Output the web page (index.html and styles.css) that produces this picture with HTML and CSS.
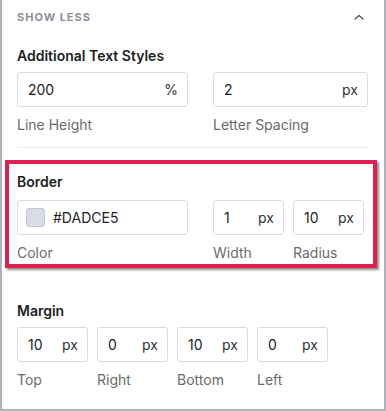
FILE: index.html
```html
<!DOCTYPE html>
<html lang="en">
<head>
  <meta charset="UTF-8" />
  <meta name="viewport" content="width=device-width, initial-scale=1.0" />
  <title>Text Styles</title>
  <link rel="stylesheet" href="styles.css">
</head>
<body>

  <div class="panel">
    <div class="toggle">
      <span class="toggle-label">SHOW LESS</span>
      <svg class="chevron" width="10" height="6" viewBox="0 0 10 6">
        <path d="M1 5 L5 1.5 L9 5" fill="none" stroke="#555" stroke-width="1.4" stroke-linecap="round" stroke-linejoin="round"/>
      </svg>
    </div>

    <div class="group">
      <h3>Additional Text Styles</h3>
      <div class="row">
        <div class="field field-wide">
          <div class="input"><span>200</span><span class="unit">%</span></div>
          <label>Line Height</label>
        </div>
        <div class="field field-mid">
          <div class="input"><span>2</span><span class="unit">px</span></div>
          <label>Letter Spacing</label>
        </div>
      </div>
    </div>

    <hr class="divider">

    <div class="group highlight">
      <h3>Border</h3>
      <div class="row">
        <div class="field field-wide">
          <div class="input color-input">
            <span class="swatch"></span><span>#DADCE5</span>
          </div>
          <label>Color</label>
        </div>
        <div class="small-set">
          <div class="field field-small">
            <div class="input"><span>1</span><span class="unit">px</span></div>
            <label>Width</label>
          </div>
          <div class="field field-small">
            <div class="input"><span>10</span><span class="unit">px</span></div>
            <label>Radius</label>
          </div>
        </div>
      </div>
    </div>

    <div class="group margin-group">
      <h3>Margin</h3>
      <div class="small-set">
        <div class="field field-small">
          <div class="input"><span>10</span><span class="unit">px</span></div>
          <label>Top</label>
        </div>
        <div class="field field-small">
          <div class="input"><span>0</span><span class="unit">px</span></div>
          <label>Right</label>
        </div>
        <div class="field field-small">
          <div class="input"><span>10</span><span class="unit">px</span></div>
          <label>Bottom</label>
        </div>
        <div class="field field-small">
          <div class="input"><span>0</span><span class="unit">px</span></div>
          <label>Left</label>
        </div>
      </div>
    </div>
  </div>

</body>
</html>
```

FILE: styles.css
```css
html, body {
  margin: 0;
  background: #fff;
}
body {
  font-family: 'Inter', 'Liberation Sans', sans-serif;
  color: #1e1e1e;
}
.panel {
  box-sizing: border-box;
  width: 386px;
  height: 411px;
  border: 2px solid #a9b6c2;
  border-top: none;
  padding: 0 16px 0 15px;
}
.toggle {
  display: flex;
  align-items: center;
  justify-content: space-between;
  height: 34px;
  padding-right: 4px;
}
.toggle-label {
  font-size: 11px;
  font-weight: 700;
  letter-spacing: 1px;
  color: #8b9099;
}
.group h3 {
  margin: 0;
  font-size: 14px;
  line-height: 20px;
  font-weight: 600;
  color: #1e1e1e;
}
.group > h3 {
  margin-top: 12px;
}
.row {
  display: flex;
  gap: 25px;
  margin-top: 6px;
}
.small-set {
  display: flex;
  gap: 9px;
}
.field label {
  display: block;
  margin-top: 8px;
  font-size: 14px;
  line-height: 20px;
  color: #6b6b6b;
}
.field-wide { width: 171px; }
.field-mid { width: 155px; }
.field-small { width: 71px; }
.input {
  box-sizing: border-box;
  height: 35px;
  display: flex;
  align-items: center;
  justify-content: space-between;
  padding: 0 9px 0 10px;
  border: 1px solid #dadce5;
  border-radius: 3px;
  background: #fff;
  font-size: 14px;
  color: #1e1e1e;
}
.unit {
  color: #333;
}
.color-input {
  justify-content: flex-start;
  gap: 8px;
  padding-left: 8px;
}
.swatch {
  box-sizing: border-box;
  width: 19px;
  height: 19px;
  border-radius: 3px;
  background: #dadce5;
  border: 1px solid #c4c7d1;
}
.divider {
  margin: 12px 0 0;
  border: none;
  border-top: 1px solid #e6e8ec;
}
.highlight {
  margin: 12px -9px 0 -12px;
  padding: 8px 5px 1px 8px;
  border: 4px solid #de1f50;
  box-shadow: 2px 2px 2px rgba(0, 0, 0, 0.45);
}
.highlight > h3 {
  margin-top: 0;
}
.highlight .row {
  margin-top: 8px;
}
.margin-group {
  margin-top: 33px;
}
.margin-group > h3 {
  margin-top: 0;
}
.margin-group .small-set {
  margin-top: 6px;
}
```
